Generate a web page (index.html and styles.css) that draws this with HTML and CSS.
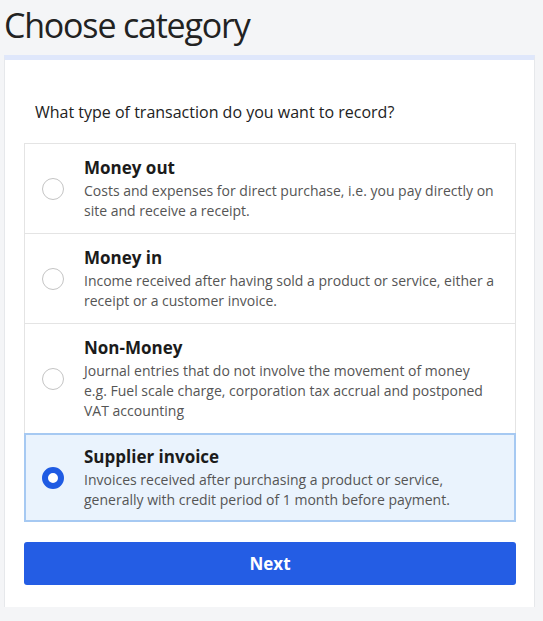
FILE: index.html
```html
<!DOCTYPE html>
<html lang="en">
<head>
<meta charset="utf-8">
<title>Choose category</title>
<link rel="stylesheet" href="styles.css">
</head>
<body>
<h1 class="page-title">Choose category</h1>
<div class="card">
  <p class="question">What type of transaction do you want to record?</p>
  <div class="options">
    <label class="option">
      <span class="radio"></span>
      <span class="option-text">
        <span class="option-title">Money out</span>
        <span class="option-desc">Costs and expenses for direct purchase, i.e. you pay directly on site and receive a receipt.</span>
      </span>
    </label>
    <label class="option">
      <span class="radio"></span>
      <span class="option-text">
        <span class="option-title">Money in</span>
        <span class="option-desc">Income received after having sold a product or service, either a receipt or a customer invoice.</span>
      </span>
    </label>
    <label class="option">
      <span class="radio"></span>
      <span class="option-text">
        <span class="option-title">Non-Money</span>
        <span class="option-desc">Journal entries that do not involve the movement of money e.g. Fuel scale charge, corporation tax accrual and postponed VAT accounting</span>
      </span>
    </label>
    <label class="option option-selected">
      <span class="radio radio-checked"></span>
      <span class="option-text">
        <span class="option-title">Supplier invoice</span>
        <span class="option-desc">Invoices received after purchasing a product or service, generally with credit period of 1 month before payment.</span>
      </span>
    </label>
  </div>
  <button class="next-btn" type="button">Next</button>
</div>
</body>
</html>
```
FILE: styles.css
```css
* { box-sizing: border-box; }
html, body {
  margin: 0;
  padding: 0;
  background: #f4f5f7;
  font-family: "Open Sans", "Noto Sans", sans-serif;
  color: #222;
}
.page-title {
  margin: 0;
  padding: 2px 0 0 4px;
  height: 55px;
  font-size: 34px;
  letter-spacing: -1.2px;
  line-height: 46px;
  font-weight: 400;
  color: #222;
}
.card {
  margin-left: 4px;
  width: 531px;
  background: #fff;
  border-top: 5px solid #dfe7fb;
  border-left: 1px solid #e6e8eb;
  border-right: 1px solid #e6e8eb;
  padding: 40px 18px 22px 19px;
}
.question {
  margin: 0 0 19px 11px;
  font-size: 16px;
  line-height: 24px;
  color: #222;
}
.options {
  display: flex;
  flex-direction: column;
}
.option {
  display: flex;
  align-items: center;
  gap: 20px;
  padding: 13px 20px 12px 17px;
  border: 1px solid #e4e4e4;
  margin-top: -1px;
  background: #fff;
}
.option:first-child { margin-top: 0; }
.option-selected {
  background: #eaf3fd;
  border: 2px solid #a6c9f2;
  padding: 11px 19px 10px 16px;
}
.radio {
  flex: 0 0 22px;
  width: 22px;
  height: 22px;
  border-radius: 50%;
  border: 1.5px solid #c4c4c4;
  background: #fff;
}
.radio-checked {
  border: 6px solid #1f5be3;
  background: #fff;
}
.option-text {
  display: flex;
  flex-direction: column;
}
.option-title {
  font-size: 17px;
  line-height: 22px;
  font-weight: 700;
  color: #1b1b1b;
  margin-bottom: 2px;
}
.option-desc {
  font-size: 14px;
  line-height: 20px;
  color: #555;
}
.next-btn {
  display: block;
  width: 100%;
  margin-top: 20px;
  height: 43px;
  border: none;
  border-radius: 3px;
  background: #245de4;
  color: #fff;
  font-family: "Open Sans", "Noto Sans", sans-serif;
  font-size: 17px;
  font-weight: 700;
  cursor: pointer;
}
```
